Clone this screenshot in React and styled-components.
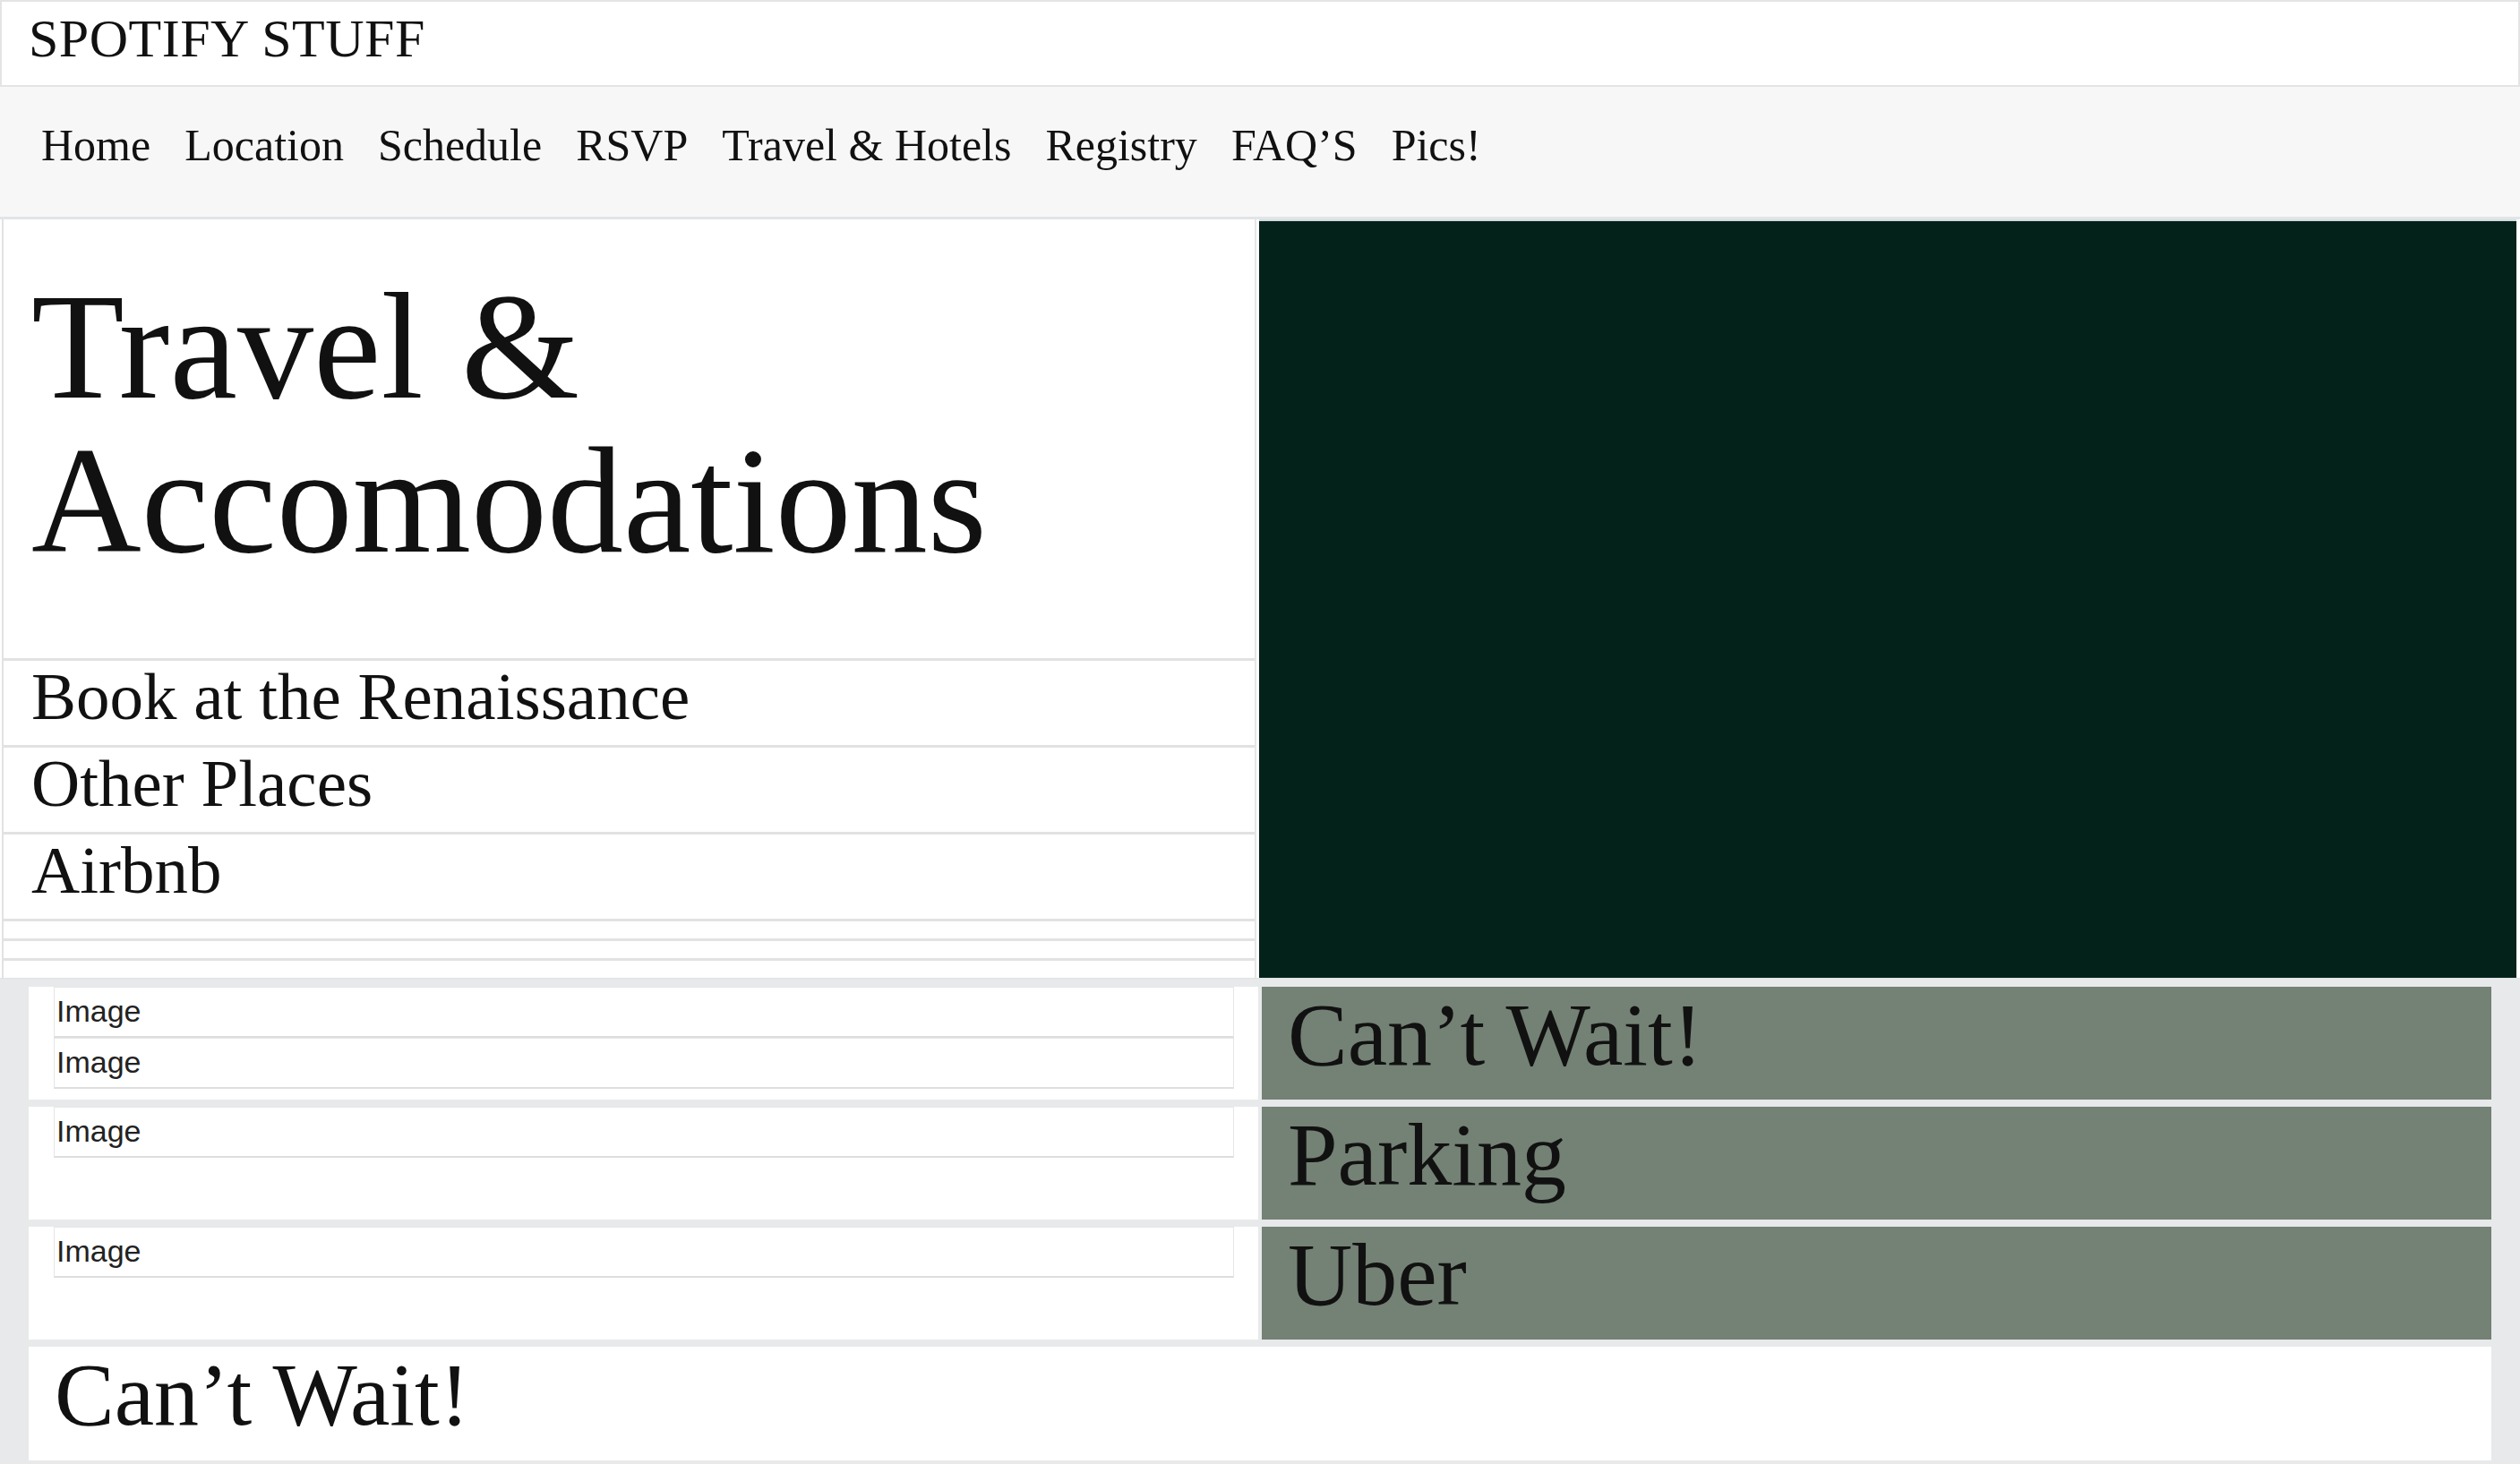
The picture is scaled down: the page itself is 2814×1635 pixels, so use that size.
import React from "react";
import styled, { createGlobalStyle } from "styled-components";

const GlobalStyle = createGlobalStyle`
  html, body {
    margin: 0;
    padding: 0;
    background: #e8e9ea;
  }
  body {
    font-family: "Liberation Serif", "DejaVu Serif", serif;
    color: #111;
  }
`;

const Page = styled.div`
  width: 2814px;
  min-height: 1635px;
  background: #e8e9ea;
`;

const Header = styled.header`
  height: 93px;
  background: #fff;
  border: 2px solid #e4e4e4;
  padding-left: 30px;
`;

const SiteTitle = styled.h1`
  margin: 0;
  padding-top: 7px;
  font-size: 60px;
  font-weight: 400;
  letter-spacing: 0.5px;
  line-height: 1.15;
`;

const Nav = styled.nav`
  height: 148px;
  background: #f7f7f7;
  border-bottom: 3px solid #e1e5e8;
  display: flex;
  align-items: center;
  gap: 38px;
  padding: 0 0 16px 46px;
  box-sizing: border-box;
`;

const NavLink = styled.a`
  font-size: 50px;
  color: #111;
  text-decoration: none;
`;

const Top = styled.section`
  display: grid;
  grid-template-columns: 1401px 1fr;
  gap: 3px;
  padding: 0 4px 0 2px;
  background: #fff;
`;

const LeftCol = styled.div`
  display: flex;
  flex-direction: column;
  border-left: 2px solid #e2e2e2;
  border-right: 2px solid #e6e6e6;
`;

const Heading = styled.h2`
  margin: 0;
  height: 490px;
  box-sizing: border-box;
  padding: 56px 0 0 31px;
  font-size: 170px;
  line-height: 172px;
  font-weight: 400;
`;

const LinkRow = styled.div`
  height: 97px;
  box-sizing: border-box;
  border-top: 3px solid #e2e2e2;
  padding-left: 31px;
  font-size: 75px;
  line-height: 80px;
`;

const EmptyRow = styled.div`
  height: 22px;
  box-sizing: border-box;
  border-top: 3px solid #e2e2e2;
`;

const HeroPanel = styled.div`
  background: #03221a;
  border-top: 2px solid #d5dcde;
`;

const Lower = styled.section`
  display: grid;
  grid-template-columns: 1373px 1fr;
  grid-auto-rows: 126px;
  column-gap: 4px;
  row-gap: 8px;
  padding: 9px 32px 0;
  background: #e8e9ea;
  border-top: 1px solid #dde2e5;
`;

const ImageCell = styled.div`
  background: #fff;
  padding: 0 27px 0 28px;
  display: flex;
  flex-direction: column;
`;

const ImageBox = styled.div`
  height: 57px;
  box-sizing: border-box;
  border: 1px solid #e6e6e6;
  border-bottom: 2px solid #dedede;
  padding: 7px 2px 0;
  font-family: "Liberation Sans", Arial, sans-serif;
  font-size: 34px;
  color: #222;
`;

const GreenCell = styled.div`
  background: #748175;
  padding-left: 29px;
  font-size: 100px;
  line-height: 1.08;
`;

const Footer = styled.div`
  grid-column: 1 / -1;
  height: 127px;
  background: #fff;
  padding-left: 29px;
  font-size: 100px;
  line-height: 1.08;
`;

const navItems = [
  "Home",
  "Location",
  "Schedule",
  "RSVP",
  "Travel & Hotels",
  "Registry",
  "FAQ’S",
  "Pics!",
];

const links = ["Book at the Renaissance", "Other Places", "Airbnb"];

const lowerRows = [
  { images: 2, label: "Can’t Wait!" },
  { images: 1, label: "Parking" },
  { images: 1, label: "Uber" },
];

export default function App() {
  return (
    <Page>
      <GlobalStyle />
      <Header>
        <SiteTitle>SPOTIFY STUFF</SiteTitle>
      </Header>
      <Nav>
        {navItems.map((item) => (
          <NavLink key={item} href="#">
            {item}
          </NavLink>
        ))}
      </Nav>
      <Top>
        <LeftCol>
          <Heading>
            Travel &amp;
            <br />
            Accomodations
          </Heading>
          {links.map((l) => (
            <LinkRow key={l}>{l}</LinkRow>
          ))}
          <EmptyRow />
          <EmptyRow />
          <EmptyRow />
        </LeftCol>
        <HeroPanel />
      </Top>
      <Lower>
        {lowerRows.map((row) => (
          <React.Fragment key={row.label}>
            <ImageCell>
              {Array.from({ length: row.images }).map((_, i) => (
                <ImageBox key={i}>Image</ImageBox>
              ))}
            </ImageCell>
            <GreenCell>{row.label}</GreenCell>
          </React.Fragment>
        ))}
        <Footer>Can’t Wait!</Footer>
      </Lower>
    </Page>
  );
}
